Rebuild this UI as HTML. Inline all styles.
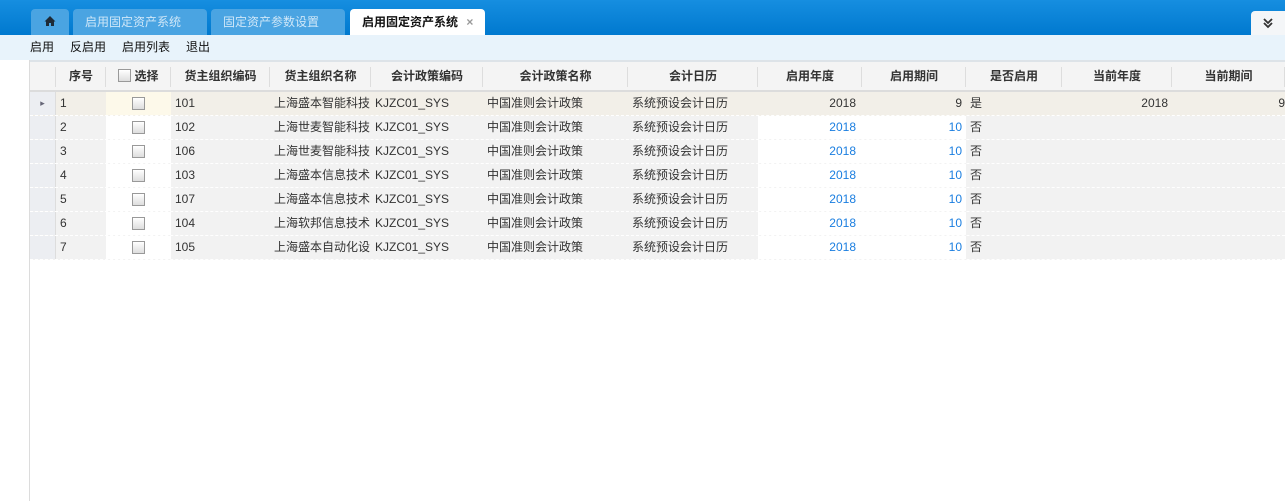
<!DOCTYPE html><html><head><meta charset="utf-8"><style>
*{margin:0;padding:0;box-sizing:border-box}
body{width:1285px;height:501px;overflow:hidden;background:#fff;font-family:"Liberation Sans","Noto Sans CJK SC",sans-serif;font-size:12px;color:#333;position:relative}
.top{position:absolute;left:0;top:0;width:1285px;height:35px;background:linear-gradient(#168ee0,#0079cf)}
.tab{position:absolute;top:9px;height:26px;border-radius:4px 4px 0 0;background:#4aa4e2;color:#cfe7f8;font-size:12px;line-height:26px;padding-left:12px}
.tab.act{background:#fff;color:#111;font-weight:bold}
.tb{position:absolute;top:35px;left:0;width:1285px;height:25px;background:#e8f3fb;font-size:12px;line-height:25px;color:#111}
.tb span{position:absolute}
.left{position:absolute;left:0;top:60px;width:30px;height:441px;border-right:1px solid #dcdcdc}
.hdr{position:absolute;top:60px;left:30px;width:1255px;height:32px;background:#f4f4f4;border-top:2px solid #dde3e8;border-bottom:2px solid #dcdcdc}
.c{position:absolute;height:100%;white-space:nowrap;overflow:hidden}
.hdr .c{text-align:center;font-weight:bold;font-size:12px;line-height:28px;color:#333}
.hdr .c:after{content:"";position:absolute;right:0;top:5px;height:20px;border-right:1px solid #ddd}
.row{position:absolute;left:30px;width:1255px;height:24px;background:#f2f2f2;border-bottom:1px dashed #fff;line-height:23px;font-size:12px}
.row .c{padding:0 4px}
.cb{display:inline-block;width:13px;height:13px;border:1px solid #999;background:linear-gradient(#fff,#ddd);vertical-align:middle}
.b{color:#1a7ee0}
</style></head><body>
<div class="top"></div>
<div class="tab" style="left:31px;width:38px;padding-left:13px"><svg width="12" height="12" viewBox="0 0 12 12" style="vertical-align:-1px"><path d="M6 1L0.5 6.5H2V11H5V8H7V11H10V6.5H11.5Z" fill="#1e2a36"/></svg></div>
<div class="tab" style="left:73px;width:134px">启用固定资产系统</div>
<div class="tab" style="left:211px;width:134px">固定资产参数设置</div>
<div class="tab act" style="left:350px;width:135px">启用固定资产系统 <span style="color:#999;margin-left:5px">×</span></div>
<div style="position:absolute;left:1251px;top:11px;width:34px;height:24px;background:#f4f6f8;border-radius:4px 0 0 0;text-align:center"><svg width="12" height="12" viewBox="0 0 12 12" style="margin-top:6px"><path d="M2 2L6 6L10 2M2 6L6 10L10 6" stroke="#333" stroke-width="1.8" fill="none"/></svg></div>
<div class="tb"><span style="left:30px">启用</span><span style="left:70px">反启用</span><span style="left:122px">启用列表</span><span style="left:186px">退出</span></div>
<div class="left"></div>
<div class="hdr">
<div class="c" style="left:0;width:26px"></div>
<div class="c" style="left:26px;width:50px">序号</div>
<div class="c" style="left:76px;width:65px"><span class="cb" style="margin-right:3px;vertical-align:-2px"></span>选择</div>
<div class="c" style="left:141px;width:99px">货主组织编码</div>
<div class="c" style="left:240px;width:101px">货主组织名称</div>
<div class="c" style="left:341px;width:112px">会计政策编码</div>
<div class="c" style="left:453px;width:145px">会计政策名称</div>
<div class="c" style="left:598px;width:130px">会计日历</div>
<div class="c" style="left:728px;width:104px">启用年度</div>
<div class="c" style="left:832px;width:104px">启用期间</div>
<div class="c" style="left:936px;width:96px">是否启用</div>
<div class="c" style="left:1032px;width:110px">当前年度</div>
<div class="c" style="left:1142px;width:113px">当前期间</div>
</div>
<div id="rows"></div>
<script>
var d=[["101","上海盛本智能科技"],["102","上海世麦智能科技"],["106","上海世麦智能科技"],["103","上海盛本信息技术"],["107","上海盛本信息技术"],["104","上海软邦信息技术"],["105","上海盛本自动化设"]];
var h="";
d.forEach(function(r,i){var s=i==0;
h+='<div class="row" style="top:'+(92+i*24)+'px;'+(s?'background:#f2efe8':'')+'">'+
'<div class="c" style="left:0;width:26px;background:#eceef2;border-right:1px solid #ddd;color:#667;font-size:9px;text-align:center">'+(s?'▸':'')+'</div>'+
'<div class="c" style="left:26px;width:50px">'+(i+1)+'</div>'+
'<div class="c" style="left:76px;width:65px;text-align:center;background:'+(s?'#fdf9ea':'#fff')+'"><span class="cb"></span></div>'+
'<div class="c" style="left:141px;width:99px">'+r[0]+'</div>'+
'<div class="c" style="left:240px;width:101px;padding-right:0">'+r[1]+'</div>'+
'<div class="c" style="left:341px;width:112px">KJZC01_SYS</div>'+
'<div class="c" style="left:453px;width:145px">中国准则会计政策</div>'+
'<div class="c" style="left:598px;width:130px">系统预设会计日历</div>'+
'<div class="c '+(s?'':'b')+'" style="left:728px;width:104px;text-align:right;padding-right:6px;'+(s?'':'background:#fff')+'">2018</div>'+
'<div class="c '+(s?'':'b')+'" style="left:832px;width:104px;text-align:right;'+(s?'':'background:#fff')+'">'+(s?'9':'10')+'</div>'+
'<div class="c" style="left:936px;width:96px">'+(s?'是':'否')+'</div>'+
'<div class="c" style="left:1032px;width:110px;text-align:right">'+(s?'2018':'')+'</div>'+
'<div class="c" style="left:1142px;width:113px;text-align:right;padding-right:0">'+(s?'9':'')+'</div></div>';});
document.getElementById('rows').innerHTML=h;
</script>
</body></html>
